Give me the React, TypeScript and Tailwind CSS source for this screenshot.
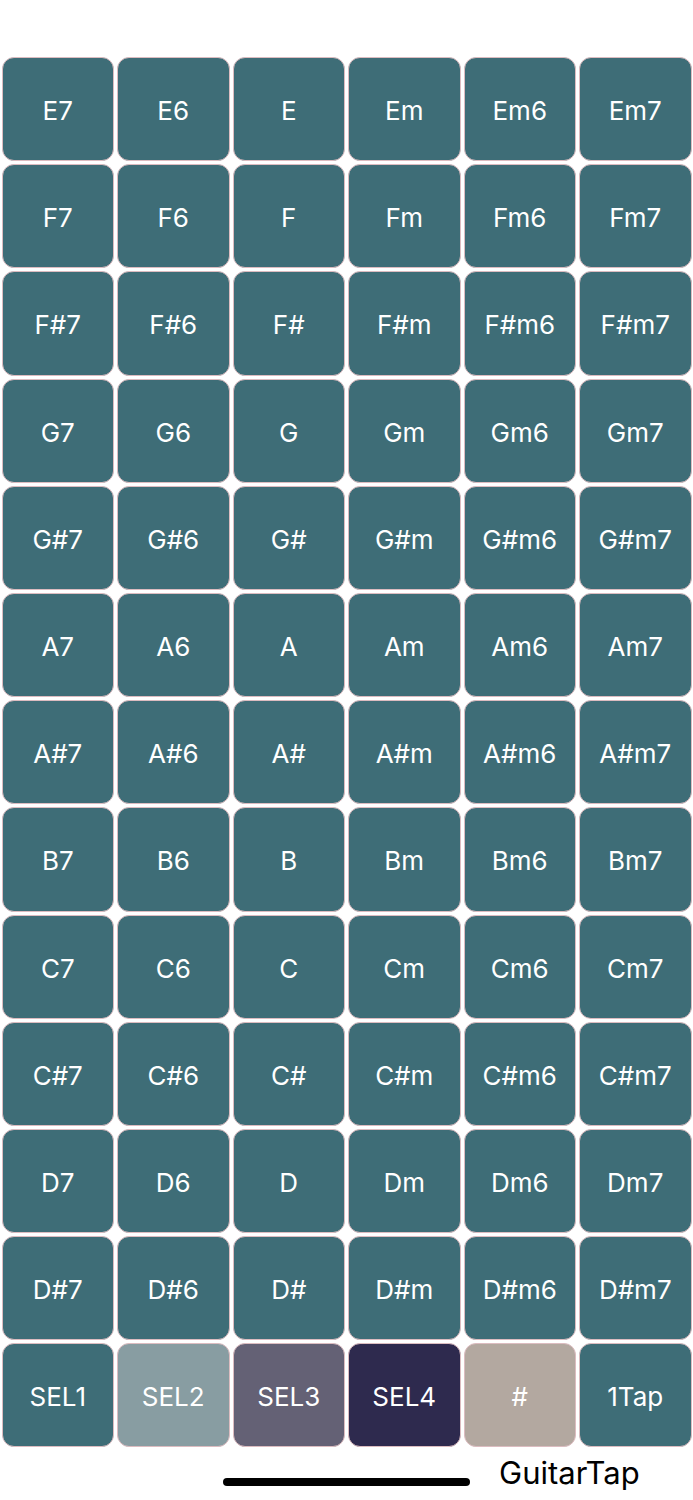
const roots = ["E", "F", "F#", "G", "G#", "A", "A#", "B", "C", "C#", "D", "D#"];
const kinds = ["7", "6", "", "m", "m6", "m7"];

const bottom = [
  { label: "SEL1", cls: "bg-[#3e6d77]" },
  { label: "SEL2", cls: "bg-[#889da2]" },
  { label: "SEL3", cls: "bg-[#646175]" },
  { label: "SEL4", cls: "bg-[#2e2a4e]" },
  { label: "#", cls: "bg-[#b3a8a0]" },
  { label: "1Tap", cls: "bg-[#3e6d77]" },
];

function Cell({ label, cls }: { label: string; cls: string }) {
  return (
    <button
      className={`m-[1.5px] flex items-center justify-center rounded-[12px] border border-[#dcbcc0] pt-[3px] text-[26px] text-white ${cls}`}
    >
      {label}
    </button>
  );
}

export default function App() {
  return (
    <div
      className="h-[1500px] w-[693px] overflow-hidden bg-white"
      style={{ fontFamily: "Inter, 'Noto Sans', sans-serif" }}
    >
      <div className="pt-[55.5px]">
        <div className="grid grid-cols-6 grid-rows-[repeat(13,107.2px)]">
          {roots.map((r) =>
            kinds.map((k) => <Cell key={r + k} label={r + k} cls="bg-[#3e6d77]" />)
          )}
          {bottom.map((b) => (
            <Cell key={b.label} label={b.label} cls={b.cls} />
          ))}
        </div>
      </div>

      {/* home indicator + title */}
      <div className="relative flex h-[51px] justify-center pt-[29px]">
        <div className="h-[8px] w-[247px] rounded-full bg-black" />
        <span className="absolute left-[499px] top-[8px] text-[31px] leading-none text-black">
          GuitarTap
        </span>
      </div>
    </div>
  );
}
